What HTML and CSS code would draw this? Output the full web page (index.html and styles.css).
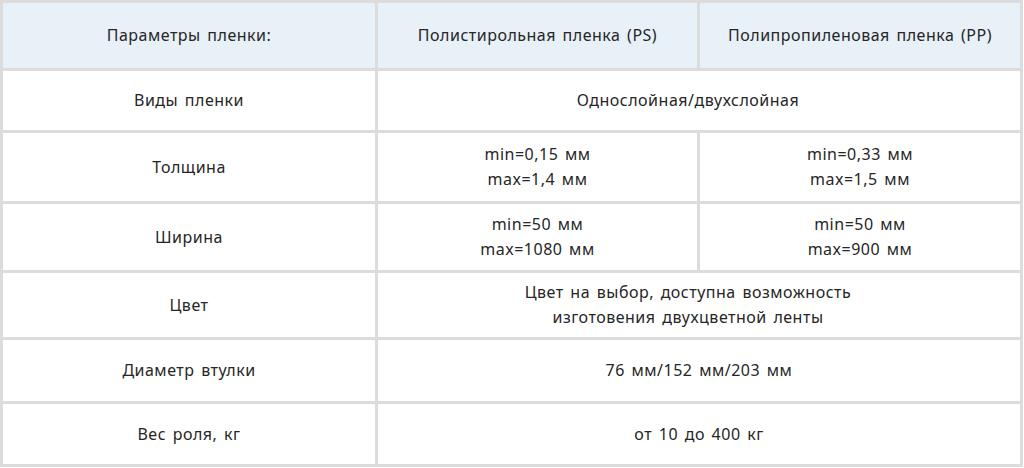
FILE: index.html
```html
<!DOCTYPE html>
<html lang="ru">
<head>
<meta charset="utf-8">
<link rel="stylesheet" href="styles.css">
</head>
<body>
<div class="table">
  <div class="cell head">Параметры пленки:</div>
  <div class="cell head">Полистирольная пленка (PS)</div>
  <div class="cell head">Полипропиленовая пленка (PP)</div>

  <div class="cell">Виды пленки</div>
  <div class="cell span shifted">Однослойная/двухслойная</div>

  <div class="cell">Толщина</div>
  <div class="cell">min=0,15 мм<br>max=1,4 мм</div>
  <div class="cell">min=0,33 мм<br>max=1,5 мм</div>

  <div class="cell">Ширина</div>
  <div class="cell">min=50 мм<br>max=1080 мм</div>
  <div class="cell">min=50 мм<br>max=900 мм</div>

  <div class="cell">Цвет</div>
  <div class="cell span shifted">Цвет на выбор, доступна возможность<br>изготовения двухцветной ленты</div>

  <div class="cell">Диаметр втулки</div>
  <div class="cell span">76 мм/152 мм/203 мм</div>

  <div class="cell">Вес роля, кг</div>
  <div class="cell span">от 10 до 400 кг</div>
</div>
</body>
</html>
```
FILE: styles.css
```css
html, body {
  margin: 0;
  padding: 0;
  background: #ffffff;
}
.table {
  display: grid;
  width: 1023px;
  box-sizing: border-box;
  grid-template-columns: 372px 319px 320px;
  grid-template-rows: 65px 59px 68px 66px 64px 61px 60px;
  gap: 3px;
  padding: 3px;
  background: #dcdcdc;
  font-family: "Noto Sans", "Open Sans", sans-serif;
  font-size: 16px;
  letter-spacing: 0.5px;
  word-spacing: 2px;
  line-height: 25px;
  color: #262626;
}
.cell {
  background: #ffffff;
  display: flex;
  align-items: center;
  justify-content: center;
  text-align: center;
}
.head {
  background: #e8f0f8;
}
.span {
  grid-column: span 2;
}
.shifted {
  padding-right: 22px;
}
```
